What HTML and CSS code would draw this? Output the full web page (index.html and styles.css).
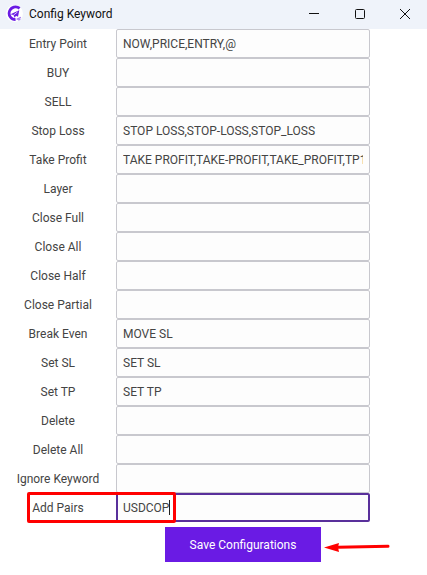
FILE: index.html
```html
<!DOCTYPE html>
<html lang="en">
<head>
    <meta charset="UTF-8">
    <meta name="viewport" content="width=device-width, initial-scale=1.0">
    <title>Config Keyword</title>
    <link rel="stylesheet" href="styles.css">
</head>
<body>
    <header class="titlebar">
        <svg class="logo" viewBox="0 0 16 16" aria-hidden="true">
            <circle cx="8" cy="8" r="8" fill="#fff"/>
            <path d="M12.8 3.2A6 6 0 1 0 9 13.8" fill="none" stroke="#6a1be4" stroke-width="2.6"/>
            <path d="M12.5 5L4.2 8.6L7 9.5L8.2 12L9.4 10.2L11.3 11Z" fill="#6a1be4"/>
            <path d="M7 9.5L10.8 6.6" stroke="#fff" stroke-width="0.7"/>
            <path d="M10 13.5L14 11.6M11.5 14.3L13.5 13.4" stroke="#a67cf0" stroke-width="1.2"/>
        </svg>
        <h1>Config Keyword</h1>
        <div class="window-buttons">
            <button type="button" aria-label="Minimize">
                <svg viewBox="0 0 12 12"><path d="M1 5.5H11"/></svg>
            </button>
            <button type="button" aria-label="Maximize">
                <svg viewBox="0 0 12 12"><rect x="1.5" y="1.5" width="9" height="9" rx="1"/></svg>
            </button>
            <button type="button" aria-label="Close">
                <svg viewBox="0 0 12 12"><path d="M1 1L11 11M11 1L1 11"/></svg>
            </button>
        </div>
    </header>

    <form class="config">
        <div class="row"><label for="entry">Entry Point</label><input type="text" id="entry" value="NOW,PRICE,ENTRY,@"></div>
        <div class="row"><label for="buy">BUY</label><input type="text" id="buy"></div>
        <div class="row"><label for="sell">SELL</label><input type="text" id="sell"></div>
        <div class="row"><label for="stopLoss">Stop Loss</label><input type="text" id="stopLoss" value="STOP LOSS,STOP-LOSS,STOP_LOSS"></div>
        <div class="row"><label for="takeProfit">Take Profit</label><input type="text" id="takeProfit" value="TAKE PROFIT,TAKE-PROFIT,TAKE_PROFIT,TP1,TP2"></div>
        <div class="row"><label for="layer">Layer</label><input type="text" id="layer"></div>
        <div class="row"><label for="closeFull">Close Full</label><input type="text" id="closeFull"></div>
        <div class="row"><label for="closeAll">Close All</label><input type="text" id="closeAll"></div>
        <div class="row"><label for="closeHalf">Close Half</label><input type="text" id="closeHalf"></div>
        <div class="row"><label for="closePartial">Close Partial</label><input type="text" id="closePartial"></div>
        <div class="row"><label for="breakEven">Break Even</label><input type="text" id="breakEven" value="MOVE SL"></div>
        <div class="row"><label for="setSl">Set SL</label><input type="text" id="setSl" value="SET SL"></div>
        <div class="row"><label for="setTp">Set TP</label><input type="text" id="setTp" value="SET TP"></div>
        <div class="row"><label for="delete">Delete</label><input type="text" id="delete"></div>
        <div class="row"><label for="deleteAll">Delete All</label><input type="text" id="deleteAll"></div>
        <div class="row"><label for="ignore">Ignore Keyword</label><input type="text" id="ignore"></div>
        <div class="row active">
            <label for="addPairs">Add Pairs</label><input type="text" id="addPairs" value="USDCOP">
            <span class="caret"></span>
            <span class="highlight"></span>
        </div>
        <div class="actions">
            <div class="save">
                <button type="submit" class="save-btn">Save Configurations</button>
                <svg class="arrow" viewBox="0 0 66 12" aria-hidden="true">
                    <path d="M14 6.3L64 5.2" stroke="#f00" stroke-width="3" stroke-linecap="round"/>
                    <path d="M0 6.5L15 2L14 6.3L15 11Z" fill="#f00"/>
                </svg>
            </div>
        </div>
    </form>
</body>
</html>
```
FILE: styles.css
```css
* {
    box-sizing: border-box;
}

body {
    margin: 0;
    background-color: #fff;
    color: #444;
    font-family: Roboto, "Noto Sans", sans-serif;
    font-size: 12px;
}

.titlebar {
    display: flex;
    align-items: center;
    height: 29px;
    padding-left: 6px;
    padding-bottom: 2px;
    background-color: #eff3fa;
    color: #111;
}

.logo {
    width: 17px;
    height: 17px;
}

.titlebar h1 {
    flex: 1;
    margin: 0 0 0 6px;
    font-size: 12px;
    font-weight: normal;
}

.window-buttons {
    display: flex;
}

.window-buttons button {
    display: flex;
    align-items: center;
    justify-content: center;
    width: 46px;
    height: 27px;
    padding: 0;
    border: none;
    background: none;
}

.window-buttons button:last-child {
    width: 44px;
}

.window-buttons svg {
    width: 12px;
    height: 12px;
    fill: none;
    stroke: #111;
}

.config {
    padding-right: 57px;
}

.row,
.actions {
    display: grid;
    grid-template-columns: 116px 1fr;
}

.row {
    position: relative;
    align-items: center;
    height: 29px;
}

.row label {
    text-align: center;
}

.row input {
    width: 100%;
    height: 29px;
    padding: 0 6px;
    border: 1px solid #c8c8ce;
    border-radius: 2px;
    background-color: #fdfdfd;
    color: #444;
    font: inherit;
    outline: none;
}

.row.active input {
    border: 2px solid #59309b;
    padding: 0 5px;
}

.caret {
    position: absolute;
    left: 169px;
    top: 7px;
    width: 1px;
    height: 15px;
    background-color: #222;
}

.highlight {
    position: absolute;
    left: 27px;
    top: -1px;
    width: 149px;
    height: 31px;
    border: 3px solid #f00;
    border-radius: 2px;
}

.actions {
    padding-top: 5px;
}

.save {
    position: relative;
    grid-column: 2;
    justify-self: center;
}

.save-btn {
    display: block;
    height: 35px;
    padding: 0 25px;
    border: none;
    background-color: #6a1be4;
    color: #fff;
    font: inherit;
}

.arrow {
    position: absolute;
    left: 100%;
    top: 14px;
    width: 66px;
    height: 12px;
    margin-left: 3px;
}
```
